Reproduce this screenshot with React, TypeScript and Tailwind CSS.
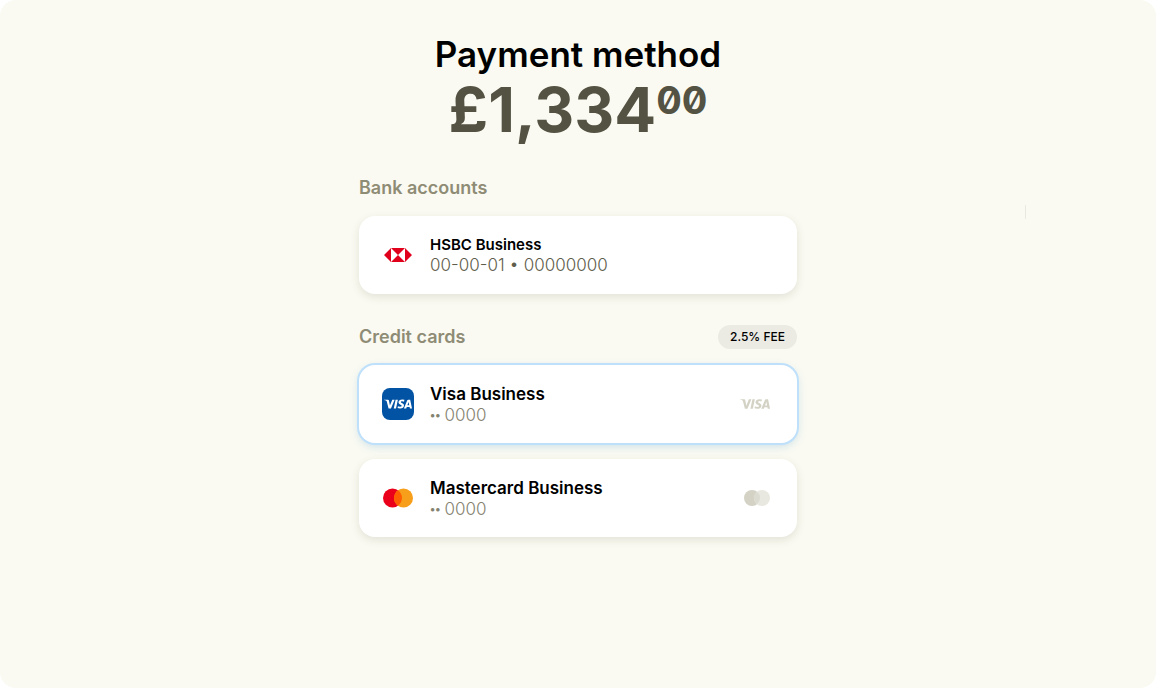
import { useState } from "react";
import type { ReactNode } from "react";
import { SiVisa } from "react-icons/si";

interface MethodCardProps {
  id: string;
  name: string;
  detail: ReactNode;
  icon: ReactNode;
  brand?: ReactNode;
  compact?: boolean;
  selected: boolean;
  onSelect: (id: string) => void;
}

function HsbcIcon() {
  return (
    <svg viewBox="0 0 28 14" className="h-[14px] w-7" aria-hidden="true">
      <path d="M7 0h14l7 7-7 7H7L0 7z" fill="#fff" />
      <path d="M7 0v14L0 7zM21 0v14l7-7zM7 0h14l-7 7zM7 14h14l-7-7z" fill="#e0001b" />
    </svg>
  );
}

function VisaIcon() {
  return (
    <span className="flex size-8 items-center justify-center rounded-lg bg-[#0353a4] text-white">
      <SiVisa className="size-7" aria-hidden="true" />
    </span>
  );
}

function MastercardIcon() {
  return (
    <svg viewBox="0 0 30 20" className="h-5 w-[30px]" aria-hidden="true">
      <circle cx="9.5" cy="10" r="9.5" fill="#eb001b" />
      <circle cx="20.5" cy="10" r="9.5" fill="#f79e1b" />
      <path d="M15 2.25a9.5 9.5 0 0 1 0 15.5a9.5 9.5 0 0 1 0-15.5z" fill="#ff5f00" />
    </svg>
  );
}

function MastercardMark() {
  return (
    <svg viewBox="0 0 26 16" className="h-4 w-[26px]" aria-hidden="true">
      <circle cx="8" cy="8" r="8" fill="#d3d2c4" />
      <circle cx="18" cy="8" r="8" fill="#e9e8e0" />
      <path d="M13 1.75a8 8 0 0 1 0 12.5a8 8 0 0 1 0-12.5z" fill="#dcdbd1" />
    </svg>
  );
}

function MaskedNumber({ last4 }: { last4: string }) {
  return (
    <span className="flex items-center gap-1">
      <span className="text-[11px] font-bold">••</span>
      <span>{last4}</span>
    </span>
  );
}

function MethodCard({ id, name, detail, icon, brand, compact, selected, onSelect }: MethodCardProps) {
  return (
    <label className="flex h-[78px] cursor-pointer items-center rounded-2xl bg-white pr-[27px] pl-[23px] shadow-[0_3px_8px_rgba(84,82,66,0.14)] has-checked:shadow-[0_3px_10px_rgba(84,160,210,0.3)] has-checked:ring-2 has-checked:ring-[#bfe0fb]">
      <input
        type="radio"
        name="method"
        value={id}
        checked={selected}
        onChange={() => onSelect(id)}
        className="sr-only"
      />
      <span className="mr-4 flex w-8 shrink-0 justify-center">{icon}</span>
      <span className="min-w-0 flex-1">
        <span className={compact ? "block text-[15px] leading-5 font-semibold" : "block text-[17px] leading-[22px] font-semibold"}>
          {name}
        </span>
        <span className={compact ? "block text-[17px] leading-5 font-light text-[#5f5d4c]" : "block text-[17px] leading-5 font-light text-[#858370]"}>
          {detail}
        </span>
      </span>
      {brand}
    </label>
  );
}

export default function App() {
  const [method, setMethod] = useState("visa");

  return (
    <main className="relative min-h-screen rounded-2xl bg-[#fafaf2] px-4 pt-8 pb-10 font-['Inter',sans-serif] text-black">
      <span className="absolute top-[205px] right-[130px] h-[14px] w-px bg-[#e9e9e1]" />

      <header className="text-center">
        <h1 className="text-[35px] leading-[44px] font-semibold">Payment method</h1>
        <p className="flex items-start justify-center text-[62px] leading-[68px] font-bold text-[#545242]">
          £1,334
          <span className="text-[38px] leading-[48px] slashed-zero">00</span>
        </p>
      </header>

      <div className="mx-auto mt-8 max-w-[438px]">
        <section>
          <h2 className="mb-4 text-lg leading-6 font-semibold text-[#8f8c76]">Bank accounts</h2>
          <MethodCard
            id="hsbc"
            name="HSBC Business"
            detail="00-00-01 • 00000000"
            icon={<HsbcIcon />}
            compact
            selected={method === "hsbc"}
            onSelect={setMethod}
          />
        </section>

        <section className="mt-[31px]">
          <div className="mb-4 flex items-center justify-between">
            <h2 className="text-lg leading-6 font-semibold text-[#8f8c76]">Credit cards</h2>
            <span className="rounded-full bg-[#ebebe4] px-3 text-xs leading-6 font-medium">2.5% FEE</span>
          </div>
          <div className="flex flex-col gap-4">
            <MethodCard
              id="visa"
              name="Visa Business"
              detail={<MaskedNumber last4="0000" />}
              icon={<VisaIcon />}
              brand={<SiVisa className="size-[30px] text-[#d3d2c4]" aria-hidden="true" />}
              selected={method === "visa"}
              onSelect={setMethod}
            />
            <MethodCard
              id="mastercard"
              name="Mastercard Business"
              detail={<MaskedNumber last4="0000" />}
              icon={<MastercardIcon />}
              brand={<MastercardMark />}
              selected={method === "mastercard"}
              onSelect={setMethod}
            />
          </div>
        </section>
      </div>
    </main>
  );
}
